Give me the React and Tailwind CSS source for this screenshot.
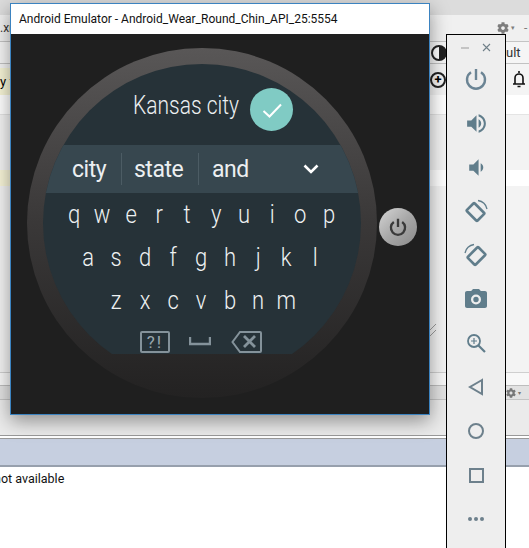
import { FaCog } from 'react-icons/fa'

const rowOne = ['q', 'w', 'e', 'r', 't', 'y', 'u', 'i', 'o', 'p']
const rowTwo = ['a', 's', 'd', 'f', 'g', 'h', 'j', 'k', 'l']
const rowThree = ['z', 'x', 'c', 'v', 'b', 'n', 'm']

function KeyRow({ keys }) {
  return (
    <div className="flex h-[43px] items-center justify-center pr-[1px]">
      {keys.map((k) => (
        <span key={k} className="w-[28.3px] scale-x-[0.88] text-center text-[25px] font-light leading-none text-[#eef1f2]">{k}</span>
      ))}
    </div>
  )
}

function Rotate({ flip }) {
  return (
    <svg width="24" height="24" viewBox="0 0 24 24" fill="none" stroke="#607d8b" className={flip ? '-scale-x-100' : ''}>
      <rect x="-5.5" y="-7.5" width="11" height="15" rx="1" strokeWidth="2.6" transform="translate(11.5 13) rotate(-45)" />
      <path d="M14 1.5A11 11 0 0 1 23 10" strokeWidth="1.3" />
    </svg>
  )
}

function SideButton({ children }) {
  return <div className="flex h-[44px] shrink-0 items-center justify-center">{children}</div>
}

function Background() {
  return (
    <div className="flex h-[548px] flex-col overflow-hidden bg-white font-[Roboto,sans-serif] text-[12px] text-black">
      <div className="h-[15px] shrink-0 bg-[#dcdcdc]" />
      <div className="flex h-[27px] shrink-0 items-center border-b border-[#c4c4c4] bg-[#f0f0f0]">
        <span className="w-[10px] overflow-hidden text-[#333]">.xı</span>
        <div className="ml-[487px] flex items-center gap-[2px] text-[#7d7d7d]">
          <FaCog size={12} />
          <span className="text-[7px]">▾</span>
          <span className="ml-[7px]">-</span>
        </div>
      </div>
      <div className="flex h-[22px] shrink-0 items-center border-b border-[#c2c2c2] bg-[#f5f5f5] pl-[431px]">
        <div className="h-[16px] w-[16px] shrink-0 rounded-full border-2 border-[#222] bg-linear-to-r from-white from-50% to-[#222] to-50%" />
        <span className="ml-[59px] text-[13px] text-[#333]">ult</span>
      </div>
      <div className="flex h-[31px] shrink-0 items-center bg-[#f4f4f4]">
        <div className="mt-[4px] flex h-[27px] w-[11px] items-center overflow-hidden whitespace-nowrap bg-[#f7f5d6] text-[13px]">y f</div>
        <div className="ml-[419px] flex h-[16px] w-[16px] shrink-0 items-center justify-center rounded-full border-2 border-[#222] text-[13px] font-bold leading-none">+</div>
        <svg className="ml-[66px]" width="14" height="17" viewBox="0 0 14 17" fill="none" stroke="#111" strokeWidth="1.6">
          <path d="M7 0v2M1 13h12M3 13V7a4 4 0 0 1 8 0v6M5.5 15.5h3" />
        </svg>
      </div>
      <div className="h-[20px] shrink-0 border-b border-[#e4e4e4] bg-white" />
      <div className="h-[55px] shrink-0 bg-[#f3f3f3]" />
      <div className="h-[16px] w-[11px] shrink-0 bg-[#f8f5d8]" />
      <div className="h-[159px] shrink-0 bg-[#f3f3f3]" />
      <div className="h-[28px] shrink-0 border-b border-[#cfcfcf] bg-[#f3f3f3]" />
      <div className="h-[13px] shrink-0 border-b border-[#bdbdbd] bg-[#f8f8f8]" />
      <div className="flex h-[14px] shrink-0 items-center border-b border-[#c4c4c4] bg-[#e2e2e2] pl-[506px] text-[#777]">
        <FaCog size={10} />
        <span className="ml-[2px] text-[6px]">▾</span>
      </div>
      <div className="h-[35px] shrink-0 bg-[#ebebeb]" />
      <div className="h-[4px] shrink-0 border-y border-[#999] bg-white" />
      <div className="h-[28px] shrink-0 border-b-2 border-[#97a0ad] bg-[#c6cfe0]" />
      <div className="ml-[-6px] mt-[3px] text-[12.5px] leading-[17px] text-[#111]">not available</div>
    </div>
  )
}

function WatchScreen() {
  return (
    <div className="h-[318px] w-[318px] overflow-hidden rounded-full">
      <div className="h-[290px] overflow-hidden bg-[#263238] font-[Roboto,sans-serif]">
        <div className="flex items-center pl-[90px] pt-[24px]">
          <div className="mb-[8px] w-[105px]">
            <span className="block origin-left scale-x-[0.84] whitespace-nowrap text-[25px] font-light leading-[35px] text-[#eceff1]">Kansas city</span>
          </div>
          <div className="ml-[12px] flex h-[43px] w-[43px] items-center justify-center rounded-full bg-[#80cbc4]">
            <svg width="24" height="24" viewBox="0 0 24 24" fill="none" stroke="white" strokeWidth="2">
              <path d="M3.5 13l6 5.5L21 6.5" />
            </svg>
          </div>
        </div>
        <div className="mt-[14px] flex h-[48px] items-center bg-[#37474f] text-[23px] leading-none tracking-[-0.5px] text-[#eceff1]">
          <span className="w-[78px] pl-[29px]">city</span>
          <span className="flex h-[32px] w-[77px] items-center border-l border-[#4c5c64] pl-[12px]">state</span>
          <span className="flex h-[32px] w-[90px] items-center border-l border-[#4c5c64] pl-[13px]">and</span>
          <svg className="ml-[14px]" width="18" height="18" viewBox="0 0 18 18" fill="none" stroke="white" strokeWidth="2.6">
            <path d="M2.5 5.5L9 12l6.5-6.5" />
          </svg>
        </div>
        <KeyRow keys={rowOne} />
        <KeyRow keys={rowTwo} />
        <KeyRow keys={rowThree} />
        <div className="mt-[9px] flex items-start pl-[97px]">
          <div className="flex h-[22px] w-[30px] items-center justify-center rounded-[2px] border-2 border-[#84929a] text-[17px] leading-none tracking-[2px] text-[#98a6ad]">?!</div>
          <svg className="ml-[19px] mt-[6px]" width="22" height="10" viewBox="0 0 22 10" fill="none" stroke="#84929a" strokeWidth="2.4">
            <path d="M1 0v7h20V0" />
          </svg>
          <svg className="ml-[20px]" width="31" height="22" viewBox="0 0 31 22" fill="none" stroke="#84929a" strokeWidth="2">
            <path d="M9 1h20a1 1 0 0 1 1 1v18a1 1 0 0 1-1 1H9L1.5 11z" />
            <path d="M13 5l11 11M24 5L13 16" strokeWidth="2.8" />
          </svg>
        </div>
      </div>
    </div>
  )
}

function Emulator() {
  return (
    <div className="absolute left-[10px] top-[3px] h-[412px] w-[420px] border border-[#3b83c0] shadow-[0_6px_18px_rgba(0,0,0,0.4)]">
      <div className="flex h-[30px] items-center bg-white pl-[8px] font-[Roboto,sans-serif] text-[12px] text-[#111]">
        Android Emulator - Android_Wear_Round_Chin_API_25:5554
      </div>
      <div className="flex h-[380px] items-start bg-[#1f1f1f] pl-[16px] pt-[14px]">
        <div className="h-[350px] w-[350px] shrink-0 rounded-full bg-linear-to-b from-[#595757] via-[#3a3838] to-[#232222] p-[16px]">
          <WatchScreen />
        </div>
        <div className="ml-[2px] mt-[160px] flex h-[38px] w-[38px] items-center justify-center rounded-full bg-linear-to-br from-[#d6d6d6] via-[#a8a8a8] to-[#8a8a8a]">
          <svg width="20" height="20" viewBox="0 0 24 24" fill="none" stroke="#3a3a3a" strokeWidth="2.8">
            <path d="M12 2v10M7 6a8.5 8.5 0 1 0 10 0" />
          </svg>
        </div>
      </div>
    </div>
  )
}

function SidePanel() {
  return (
    <div className="absolute bottom-0 left-[446px] top-[34px] flex w-[60px] flex-col border-x-[1.5px] border-t-[1.5px] border-black bg-[#eeeeee]">
      <div className="flex h-[22px] shrink-0 items-center justify-center gap-[13px] pt-[3px] text-[#777]">
        <svg width="8" height="8" viewBox="0 0 8 8" stroke="#a8a8a8" strokeWidth="1.2"><path d="M0 4h8" /></svg>
        <svg width="9" height="9" viewBox="0 0 9 9" stroke="#6f7f88" strokeWidth="1.1"><path d="M1 1l7 7M8 1L1 8" /></svg>
      </div>
      <SideButton>
        <svg width="24" height="24" viewBox="0 0 24 24" fill="none" stroke="#6b8494" strokeWidth="2.4">
          <path d="M12 2v11M7 5.2a9 9 0 1 0 10 0" />
        </svg>
      </SideButton>
      <SideButton>
        <svg width="25" height="25" viewBox="0 0 24 24" fill="#607d8b">
          <path d="M3 9v6h4l5 5V4L7 9H3zm13.5 3c0-1.77-1.02-3.29-2.5-4.03v8.05c1.48-.73 2.5-2.25 2.5-4.02zM14 3.23v2.06c2.89.86 5 3.54 5 6.71s-2.11 5.85-5 6.71v2.06c4.01-.91 7-4.49 7-8.77s-2.99-7.86-7-8.77z" />
        </svg>
      </SideButton>
      <SideButton>
        <svg width="25" height="25" viewBox="0 0 24 24" fill="#607d8b">
          <path d="M18.5 12c0-1.77-1.02-3.29-2.5-4.03v8.05c1.48-.73 2.5-2.25 2.5-4.02zM5 9v6h4l5 5V4L9 9H5z" />
        </svg>
      </SideButton>
      <SideButton><Rotate /></SideButton>
      <SideButton><Rotate flip /></SideButton>
      <SideButton>
        <svg width="24" height="24" viewBox="0 0 24 24" fill="#607d8b">
          <path d="M9 2L7.17 4H3c-1.1 0-2 .9-2 2v13c0 1.1.9 2 2 2h18c1.1 0 2-.9 2-2V6c0-1.1-.9-2-2-2h-4.17L15 2H9zm3 15.5a5 5 0 1 1 0-10 5 5 0 0 1 0 10zm0-2.3a2.7 2.7 0 1 0 0-5.4 2.7 2.7 0 0 0 0 5.4z" fillRule="evenodd" />
        </svg>
      </SideButton>
      <SideButton>
        <svg width="20" height="20" viewBox="0 0 20 20" fill="none" stroke="#607d8b" strokeWidth="1.8">
          <circle cx="8" cy="8" r="6" />
          <path d="M12.5 12.5l6.5 6.5" strokeWidth="2.2" />
          <path d="M8 5v6M5 8h6" strokeWidth="1.2" />
        </svg>
      </SideButton>
      <SideButton>
        <svg width="16" height="18" viewBox="0 0 16 18" fill="none" stroke="#6d808c" strokeWidth="2">
          <path d="M14 2L2 9l12 7z" />
        </svg>
      </SideButton>
      <SideButton>
        <div className="h-[16px] w-[16px] rounded-full border-2 border-[#6d808c]" />
      </SideButton>
      <SideButton>
        <div className="h-[15px] w-[15px] border-2 border-[#6d808c]" />
      </SideButton>
      <SideButton>
        <div className="flex gap-[2px]">
          <span className="h-[4px] w-[4px] rounded-full bg-[#6d808c]" />
          <span className="h-[4px] w-[4px] rounded-full bg-[#6d808c]" />
          <span className="h-[4px] w-[4px] rounded-full bg-[#6d808c]" />
        </div>
      </SideButton>
    </div>
  )
}

export default function App() {
  return (
    <div className="relative h-[548px] w-[529px] overflow-hidden">
      <Background />
      <Emulator />
      <svg className="absolute left-[430px] top-[323px]" width="7" height="14" viewBox="0 0 7 14" fill="none" stroke="#666" strokeWidth="0.7">
        <path d="M0 7l6-6M0 13l6-6" />
      </svg>
      <SidePanel />
    </div>
  )
}
